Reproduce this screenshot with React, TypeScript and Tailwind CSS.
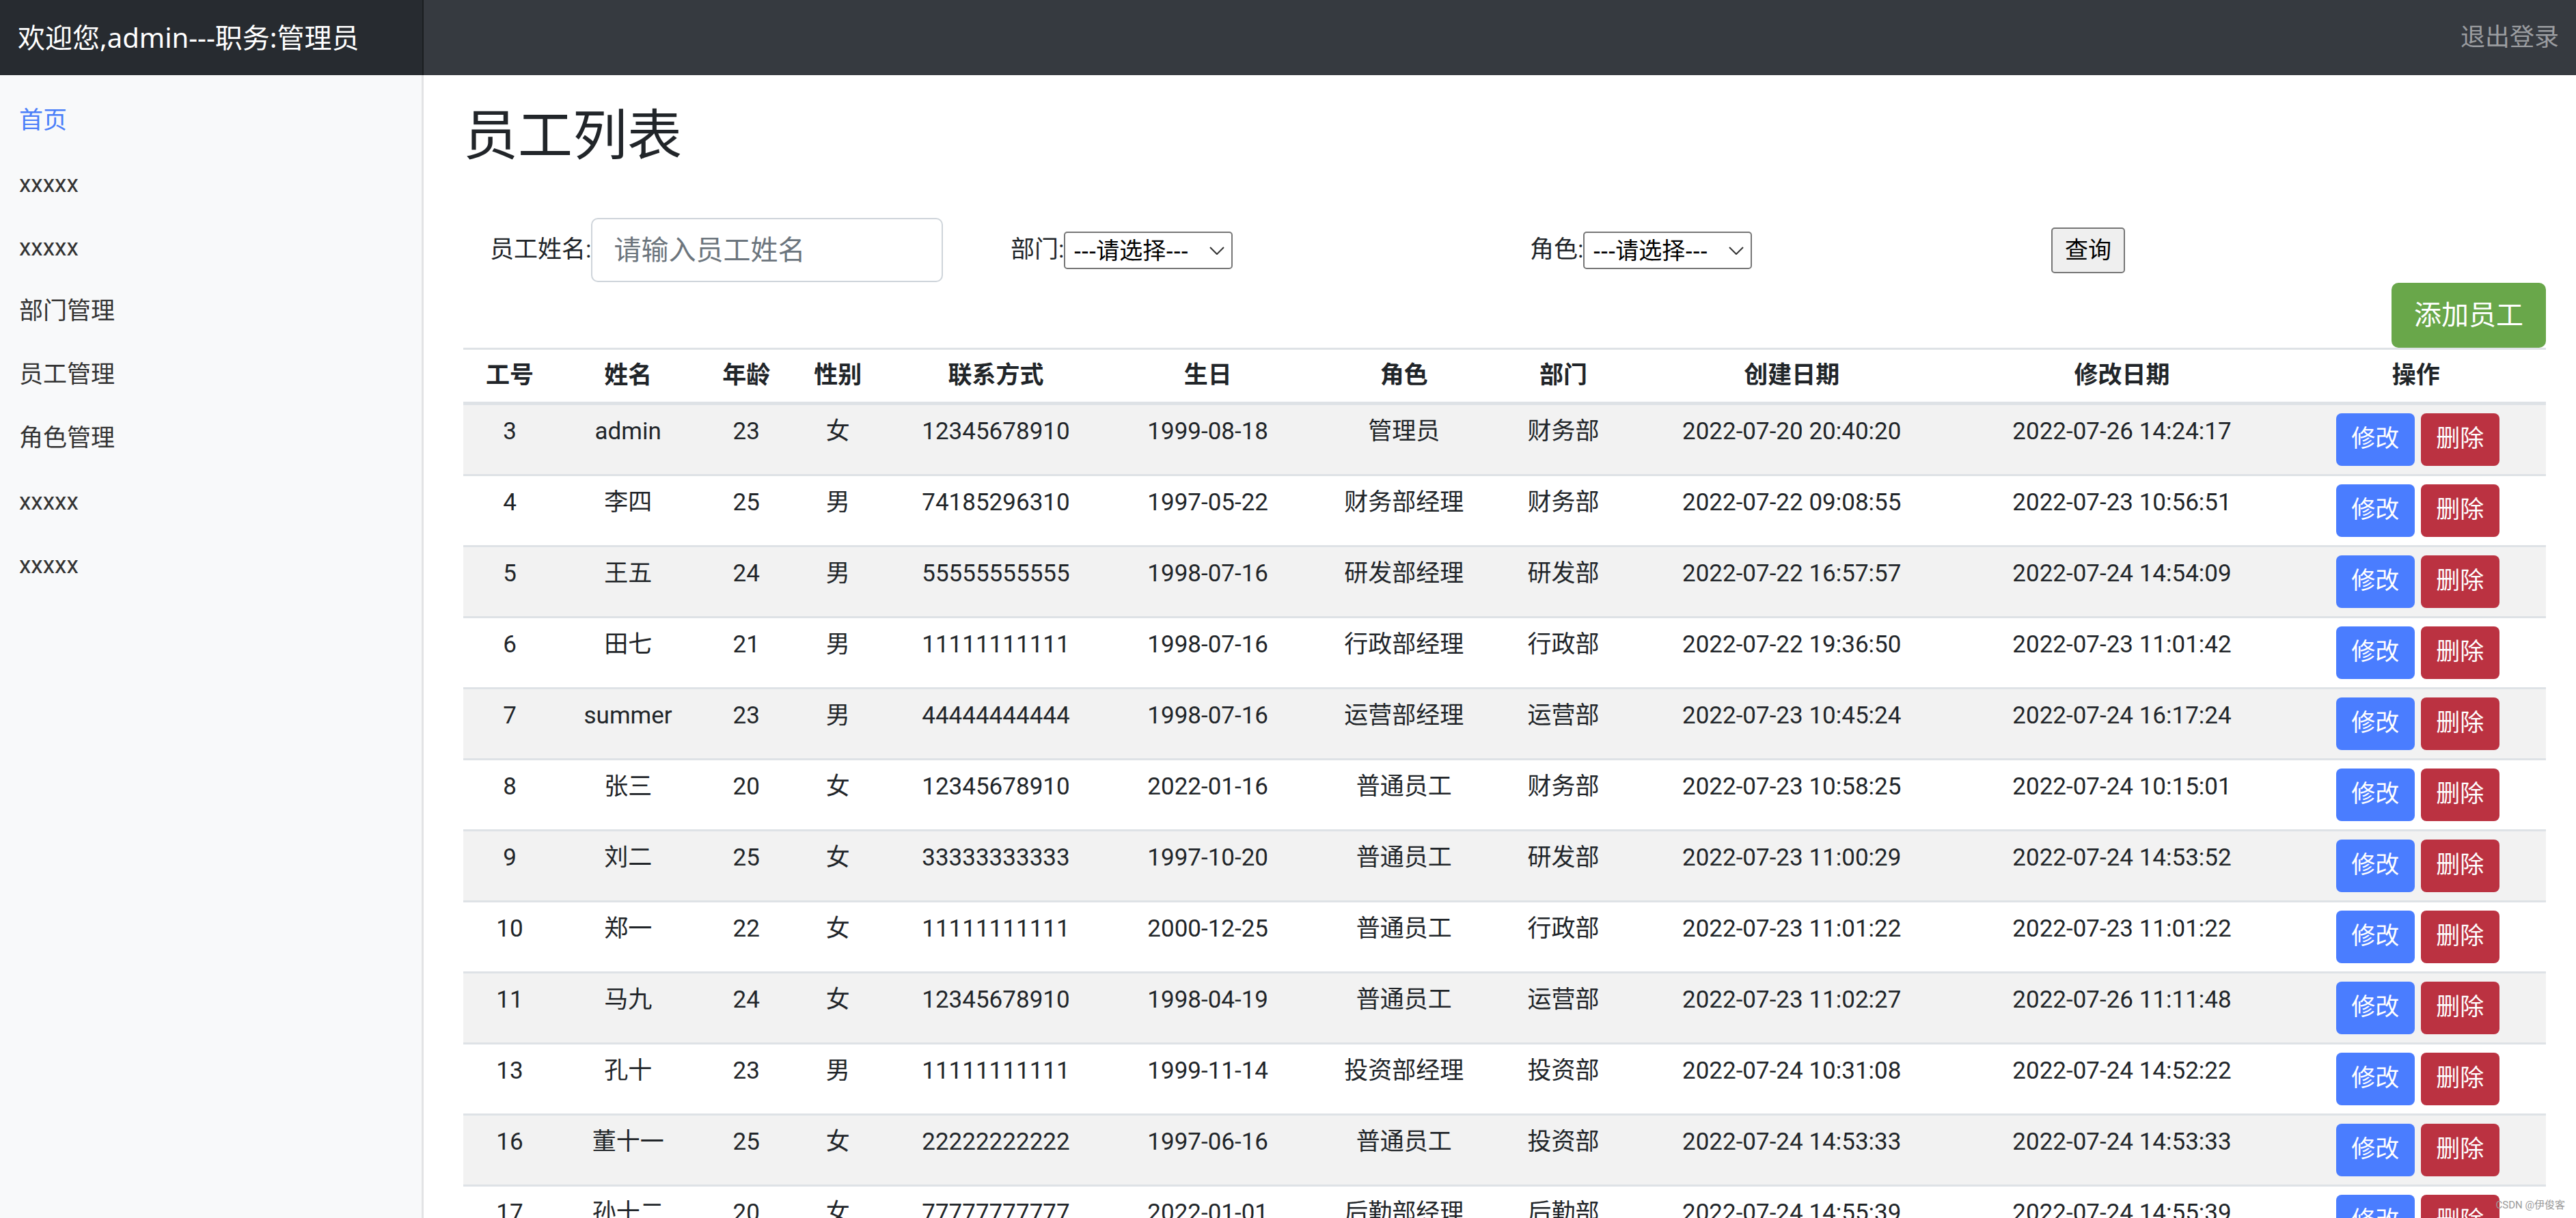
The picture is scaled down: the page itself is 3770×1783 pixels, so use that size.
const rows = [
  ['3', 'admin', '23', '女', '12345678910', '1999-08-18', '管理员', '财务部', '2022-07-20 20:40:20', '2022-07-26 14:24:17'],
  ['4', '李四', '25', '男', '74185296310', '1997-05-22', '财务部经理', '财务部', '2022-07-22 09:08:55', '2022-07-23 10:56:51'],
  ['5', '王五', '24', '男', '55555555555', '1998-07-16', '研发部经理', '研发部', '2022-07-22 16:57:57', '2022-07-24 14:54:09'],
  ['6', '田七', '21', '男', '11111111111', '1998-07-16', '行政部经理', '行政部', '2022-07-22 19:36:50', '2022-07-23 11:01:42'],
  ['7', 'summer', '23', '男', '44444444444', '1998-07-16', '运营部经理', '运营部', '2022-07-23 10:45:24', '2022-07-24 16:17:24'],
  ['8', '张三', '20', '女', '12345678910', '2022-01-16', '普通员工', '财务部', '2022-07-23 10:58:25', '2022-07-24 10:15:01'],
  ['9', '刘二', '25', '女', '33333333333', '1997-10-20', '普通员工', '研发部', '2022-07-23 11:00:29', '2022-07-24 14:53:52'],
  ['10', '郑一', '22', '女', '11111111111', '2000-12-25', '普通员工', '行政部', '2022-07-23 11:01:22', '2022-07-23 11:01:22'],
  ['11', '马九', '24', '女', '12345678910', '1998-04-19', '普通员工', '运营部', '2022-07-23 11:02:27', '2022-07-26 11:11:48'],
  ['13', '孔十', '23', '男', '11111111111', '1999-11-14', '投资部经理', '投资部', '2022-07-24 10:31:08', '2022-07-24 14:52:22'],
  ['16', '董十一', '25', '女', '22222222222', '1997-06-16', '普通员工', '投资部', '2022-07-24 14:53:33', '2022-07-24 14:53:33'],
  ['17', '孙十二', '20', '女', '77777777777', '2022-01-01', '后勤部经理', '后勤部', '2022-07-24 14:55:39', '2022-07-24 14:55:39'],
];

const headers = ['工号', '姓名', '年龄', '性别', '联系方式', '生日', '角色', '部门', '创建日期', '修改日期', '操作'];
const widths = [136, 210, 136, 132, 330, 290, 284, 182, 486, 480, 380];

const menu = ['首页', 'xxxxx', 'xxxxx', '部门管理', '员工管理', '角色管理', 'xxxxx', 'xxxxx'];

function FakeSelect() {
  return (
    <div className="relative w-[247px] h-[55px]">
      <select className="appearance-none w-full h-full border-2 border-[#767676] rounded-[5px] bg-white pl-[12px] text-[34px] leading-[51px] text-black font-['Noto_Sans','Noto_Sans_CJK_SC',sans-serif]">
        <option>---请选择---</option>
      </select>
      <svg className="absolute right-[12px] top-[22px]" width="22" height="12" viewBox="0 0 22 12">
        <polyline points="1,1 11,11 21,1" fill="none" stroke="#333" strokeWidth="2" />
      </svg>
    </div>
  );
}

export default function App() {
  return (
    <div className="relative w-[3770px] h-[1783px] overflow-hidden bg-white text-[#212529] font-[Roboto,'Noto_Sans_CJK_SC',sans-serif]">
      <header className="flex h-[110px] bg-[#363a40]">
        <div className="w-[620px] flex items-center pl-[26px] bg-[#272b30] shadow-[inset_-2px_0_0_rgba(0,0,0,0.3)] text-white text-[40px] font-['Noto_Sans','Noto_Sans_CJK_SC',sans-serif]">
          欢迎您,admin---职务:管理员
        </div>
        <a className="ml-auto pr-[25px] flex items-center text-[36px] text-[#9b9da0]">退出登录</a>
      </header>

      <div className="flex h-[1673px]">
        <nav className="w-[620px] shrink-0 bg-[#f8f9fa] border-r-[3px] border-[#e2e3e5] pt-[20px]">
          <ul>
            {menu.map((m, i) => (
              <li
                key={i}
                className={`px-[28px] py-[20px] leading-[53px] text-[35px] ${i === 0 ? 'text-[#4a7ef9]' : 'text-[#333]'}`}
              >
                {m}
              </li>
            ))}
          </ul>
        </nav>

        <main className="flex-1 pl-[58px] pr-[44px] pt-[41px]">
          <h2 className="text-[80px] leading-[96px] font-normal">员工列表</h2>

          <div className="grid grid-cols-4 items-center h-[94px] mt-[72px]">
            <div className="flex items-center pl-[39px]">
              <label className="text-[35px]">员工姓名:</label>
              <input
                className="w-[515px] h-[94px] border-2 border-[#ced4da] rounded-[10px] pl-[31px] text-[40px] placeholder:text-[#6c757d]"
                placeholder="请输入员工姓名"
              />
            </div>
            <div className="flex items-center pl-[39px]">
              <label className="text-[35px]">部门:</label>
              <FakeSelect />
            </div>
            <div className="flex items-center pl-[37px]">
              <label className="text-[35px]">角色:</label>
              <FakeSelect />
            </div>
            <div className="flex items-center pl-[38px]">
              <button className="w-[108px] h-[67px] bg-[#efefef] border-2 border-[#767676] rounded-[5px] text-[34px] text-black">
                查询
              </button>
            </div>
          </div>

          <div className="flex justify-end mt-[1px]">
            <button className="w-[226px] h-[95px] rounded-[10px] bg-[#69a74a] text-white text-[40px]">添加员工</button>
          </div>

          <table className="w-full table-fixed border-separate border-spacing-0 text-[35px]">
            <colgroup>
              {widths.map((w, i) => (
                <col key={i} style={{ width: w }} />
              ))}
            </colgroup>
            <thead>
              <tr>
                {headers.map((h) => (
                  <th
                    key={h}
                    className="h-[84px] border-t-[3px] border-b-[5px] border-[#dee2e6] py-[12px] leading-[52px] font-bold align-bottom text-center"
                  >
                    {h}
                  </th>
                ))}
              </tr>
            </thead>
            <tbody>
              {rows.map((r, i) => (
                <tr key={r[0]} className={i % 2 === 0 ? 'bg-[#f2f2f2]' : 'bg-white'}>
                  {r.map((c, j) => (
                    <td key={j} className="h-[104px] border-b-[3px] border-[#dee2e6] pt-[13px] leading-[52px] align-top text-center">
                      {c}
                    </td>
                  ))}
                  <td className="h-[104px] border-b-[3px] border-[#dee2e6] pt-[12px] align-top">
                    <div className="flex justify-center gap-[9px] pl-[5px]">
                      <button className="w-[115px] h-[77px] rounded-[8px] bg-[#4a7dff] text-white text-[35px]">修改</button>
                      <button className="w-[115px] h-[77px] rounded-[8px] bg-[#bb3241] text-white text-[35px]">删除</button>
                    </div>
                  </td>
                </tr>
              ))}
            </tbody>
          </table>
        </main>
      </div>

      <div className="absolute right-[16px] bottom-[8px] text-[15px] text-[#9a9a9a]">CSDN @伊俊客</div>
    </div>
  );
}
